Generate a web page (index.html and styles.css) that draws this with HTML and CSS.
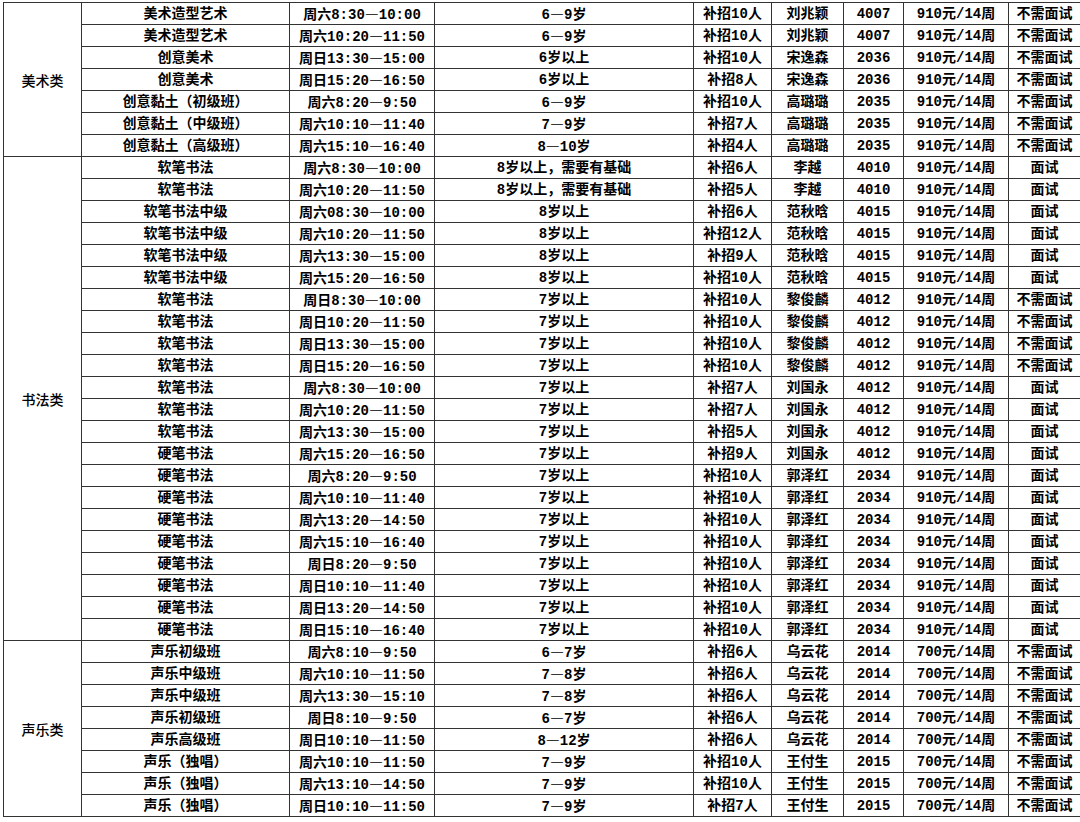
FILE: index.html
```html
<!DOCTYPE html>
<html lang="zh-CN">
<head>
<meta charset="utf-8">
<title>课程表</title>
<link rel="stylesheet" href="styles.css">
</head>
<body>
<table class="sched">
<colgroup>
<col class="c1"><col class="c2"><col class="c3"><col class="c4"><col class="c5"><col class="c6"><col class="c7"><col class="c8"><col class="c9">
</colgroup>
<tbody class="grp">
<tr><td class="cat" rowspan="7">美术类</td><td>美术造型艺术</td><td>周六8:30<span class="d">—</span>10:00</td><td>6<span class="d">—</span>9岁</td><td>补招10人</td><td>刘兆颖</td><td>4007</td><td>910元/14周</td><td>不需面试</td></tr>
<tr><td>美术造型艺术</td><td>周六10:20<span class="d">—</span>11:50</td><td>6<span class="d">—</span>9岁</td><td>补招10人</td><td>刘兆颖</td><td>4007</td><td>910元/14周</td><td>不需面试</td></tr>
<tr><td>创意美术</td><td>周日13:30<span class="d">—</span>15:00</td><td>6岁以上</td><td>补招10人</td><td>宋逸森</td><td>2036</td><td>910元/14周</td><td>不需面试</td></tr>
<tr><td>创意美术</td><td>周日15:20<span class="d">—</span>16:50</td><td>6岁以上</td><td>补招8人</td><td>宋逸森</td><td>2036</td><td>910元/14周</td><td>不需面试</td></tr>
<tr><td>创意黏土（初级班）</td><td>周六8:20<span class="d">—</span>9:50</td><td>6<span class="d">—</span>9岁</td><td>补招10人</td><td>高璐璐</td><td>2035</td><td>910元/14周</td><td>不需面试</td></tr>
<tr><td>创意黏土（中级班）</td><td>周六10:10<span class="d">—</span>11:40</td><td>7<span class="d">—</span>9岁</td><td>补招7人</td><td>高璐璐</td><td>2035</td><td>910元/14周</td><td>不需面试</td></tr>
<tr><td>创意黏土（高级班）</td><td>周六15:10<span class="d">—</span>16:40</td><td>8<span class="d">—</span>10岁</td><td>补招4人</td><td>高璐璐</td><td>2035</td><td>910元/14周</td><td>不需面试</td></tr>
</tbody>
<tbody class="grp">
<tr><td class="cat" rowspan="22">书法类</td><td>软笔书法</td><td>周六8:30<span class="d">—</span>10:00</td><td>8岁以上，需要有基础</td><td>补招6人</td><td>李越</td><td>4010</td><td>910元/14周</td><td>面试</td></tr>
<tr><td>软笔书法</td><td>周六10:20<span class="d">—</span>11:50</td><td>8岁以上，需要有基础</td><td>补招5人</td><td>李越</td><td>4010</td><td>910元/14周</td><td>面试</td></tr>
<tr><td>软笔书法中级</td><td>周六08:30<span class="d">—</span>10:00</td><td>8岁以上</td><td>补招6人</td><td>范秋晗</td><td>4015</td><td>910元/14周</td><td>面试</td></tr>
<tr><td>软笔书法中级</td><td>周六10:20<span class="d">—</span>11:50</td><td>8岁以上</td><td>补招12人</td><td>范秋晗</td><td>4015</td><td>910元/14周</td><td>面试</td></tr>
<tr><td>软笔书法中级</td><td>周六13:30<span class="d">—</span>15:00</td><td>8岁以上</td><td>补招9人</td><td>范秋晗</td><td>4015</td><td>910元/14周</td><td>面试</td></tr>
<tr><td>软笔书法中级</td><td>周六15:20<span class="d">—</span>16:50</td><td>8岁以上</td><td>补招10人</td><td>范秋晗</td><td>4015</td><td>910元/14周</td><td>面试</td></tr>
<tr><td>软笔书法</td><td>周日8:30<span class="d">—</span>10:00</td><td>7岁以上</td><td>补招10人</td><td>黎俊麟</td><td>4012</td><td>910元/14周</td><td>不需面试</td></tr>
<tr><td>软笔书法</td><td>周日10:20<span class="d">—</span>11:50</td><td>7岁以上</td><td>补招10人</td><td>黎俊麟</td><td>4012</td><td>910元/14周</td><td>不需面试</td></tr>
<tr><td>软笔书法</td><td>周日13:30<span class="d">—</span>15:00</td><td>7岁以上</td><td>补招10人</td><td>黎俊麟</td><td>4012</td><td>910元/14周</td><td>不需面试</td></tr>
<tr><td>软笔书法</td><td>周日15:20<span class="d">—</span>16:50</td><td>7岁以上</td><td>补招10人</td><td>黎俊麟</td><td>4012</td><td>910元/14周</td><td>不需面试</td></tr>
<tr><td>软笔书法</td><td>周六8:30<span class="d">—</span>10:00</td><td>7岁以上</td><td>补招7人</td><td>刘国永</td><td>4012</td><td>910元/14周</td><td>面试</td></tr>
<tr><td>软笔书法</td><td>周六10:20<span class="d">—</span>11:50</td><td>7岁以上</td><td>补招7人</td><td>刘国永</td><td>4012</td><td>910元/14周</td><td>面试</td></tr>
<tr><td>软笔书法</td><td>周六13:30<span class="d">—</span>15:00</td><td>7岁以上</td><td>补招5人</td><td>刘国永</td><td>4012</td><td>910元/14周</td><td>面试</td></tr>
<tr><td>硬笔书法</td><td>周六15:20<span class="d">—</span>16:50</td><td>7岁以上</td><td>补招9人</td><td>刘国永</td><td>4012</td><td>910元/14周</td><td>面试</td></tr>
<tr><td>硬笔书法</td><td>周六8:20<span class="d">—</span>9:50</td><td>7岁以上</td><td>补招10人</td><td>郭泽红</td><td>2034</td><td>910元/14周</td><td>面试</td></tr>
<tr><td>硬笔书法</td><td>周六10:10<span class="d">—</span>11:40</td><td>7岁以上</td><td>补招10人</td><td>郭泽红</td><td>2034</td><td>910元/14周</td><td>面试</td></tr>
<tr><td>硬笔书法</td><td>周六13:20<span class="d">—</span>14:50</td><td>7岁以上</td><td>补招10人</td><td>郭泽红</td><td>2034</td><td>910元/14周</td><td>面试</td></tr>
<tr><td>硬笔书法</td><td>周六15:10<span class="d">—</span>16:40</td><td>7岁以上</td><td>补招10人</td><td>郭泽红</td><td>2034</td><td>910元/14周</td><td>面试</td></tr>
<tr><td>硬笔书法</td><td>周日8:20<span class="d">—</span>9:50</td><td>7岁以上</td><td>补招10人</td><td>郭泽红</td><td>2034</td><td>910元/14周</td><td>面试</td></tr>
<tr><td>硬笔书法</td><td>周日10:10<span class="d">—</span>11:40</td><td>7岁以上</td><td>补招10人</td><td>郭泽红</td><td>2034</td><td>910元/14周</td><td>面试</td></tr>
<tr><td>硬笔书法</td><td>周日13:20<span class="d">—</span>14:50</td><td>7岁以上</td><td>补招10人</td><td>郭泽红</td><td>2034</td><td>910元/14周</td><td>面试</td></tr>
<tr><td>硬笔书法</td><td>周日15:10<span class="d">—</span>16:40</td><td>7岁以上</td><td>补招10人</td><td>郭泽红</td><td>2034</td><td>910元/14周</td><td>面试</td></tr>
</tbody>
<tbody class="grp">
<tr><td class="cat" rowspan="8">声乐类</td><td>声乐初级班</td><td>周六8:10<span class="d">—</span>9:50</td><td>6<span class="d">—</span>7岁</td><td>补招6人</td><td>乌云花</td><td>2014</td><td>700元/14周</td><td>不需面试</td></tr>
<tr><td>声乐中级班</td><td>周六10:10<span class="d">—</span>11:50</td><td>7<span class="d">—</span>8岁</td><td>补招6人</td><td>乌云花</td><td>2014</td><td>700元/14周</td><td>不需面试</td></tr>
<tr><td>声乐中级班</td><td>周六13:30<span class="d">—</span>15:10</td><td>7<span class="d">—</span>8岁</td><td>补招6人</td><td>乌云花</td><td>2014</td><td>700元/14周</td><td>不需面试</td></tr>
<tr><td>声乐初级班</td><td>周日8:10<span class="d">—</span>9:50</td><td>6<span class="d">—</span>7岁</td><td>补招6人</td><td>乌云花</td><td>2014</td><td>700元/14周</td><td>不需面试</td></tr>
<tr><td>声乐高级班</td><td>周日10:10<span class="d">—</span>11:50</td><td>8<span class="d">—</span>12岁</td><td>补招6人</td><td>乌云花</td><td>2014</td><td>700元/14周</td><td>不需面试</td></tr>
<tr><td>声乐（独唱）</td><td>周六10:10<span class="d">—</span>11:50</td><td>7<span class="d">—</span>9岁</td><td>补招10人</td><td>王付生</td><td>2015</td><td>700元/14周</td><td>不需面试</td></tr>
<tr><td>声乐（独唱）</td><td>周六13:10<span class="d">—</span>14:50</td><td>7<span class="d">—</span>9岁</td><td>补招10人</td><td>王付生</td><td>2015</td><td>700元/14周</td><td>不需面试</td></tr>
<tr><td>声乐（独唱）</td><td>周日10:10<span class="d">—</span>11:50</td><td>7<span class="d">—</span>9岁</td><td>补招7人</td><td>王付生</td><td>2015</td><td>700元/14周</td><td>不需面试</td></tr>
</tbody>
</table>
</body>
</html>
```
FILE: styles.css
```css
html, body {
  margin: 0;
  padding: 0;
  background: #ffffff;
  overflow: hidden;
}

body {
  width: 1080px;
  height: 822px;
}

.sched {
  margin: 2px 0 0 3px;
  border-collapse: collapse;
  table-layout: fixed;
  width: 1077px;
  font-family: "Liberation Mono", "Noto Sans CJK SC", monospace;
  font-size: 14px;
  font-weight: bold;
  color: #000;
}

.c1 { width: 78px; }
.c2 { width: 208px; }
.c3 { width: 145px; }
.c4 { width: 259px; }
.c5 { width: 78px; }
.c6 { width: 72px; }
.c7 { width: 60px; }
.c8 { width: 105px; }
.c9 { width: 72px; }

.sched tr {
  height: 22px;
}

.sched td {
  border: 1px solid #333;
  height: 21px;
  padding: 0;
  line-height: 14px;
  text-align: center;
  vertical-align: middle;
  white-space: nowrap;
  overflow: hidden;
}

.sched td.cat {
  font-family: "Noto Sans CJK SC", sans-serif;
  font-weight: 500;
  font-size: 14px;
}

.d {
  font-family: "Noto Sans CJK SC", sans-serif;
}
```
